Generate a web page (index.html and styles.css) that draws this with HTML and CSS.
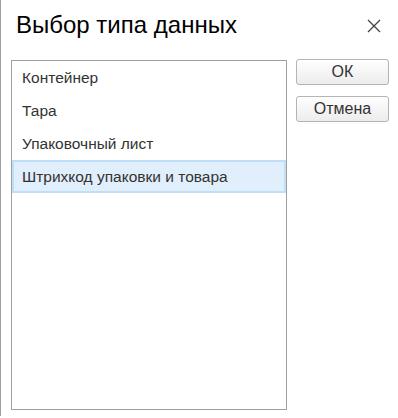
FILE: index.html
```html
<!DOCTYPE html>
<html lang="ru">
<head>
  <meta charset="UTF-8" />
  <title>Выбор типа данных</title>
  <link rel="stylesheet" href="styles.css">
</head>
<body>
  <div class="dialog">
    <div class="header">
      <h2 class="title">Выбор типа данных</h2>
      <span class="close">
        <svg width="14" height="14" viewBox="0 0 14 14">
          <path d="M1 1 L13 13 M13 1 L1 13" stroke="#444" stroke-width="1.3" fill="none"/>
        </svg>
      </span>
    </div>
    <div class="content">
      <div class="list">
        <div class="item">Контейнер</div>
        <div class="item">Тара</div>
        <div class="item">Упаковочный лист</div>
        <div class="item selected">Штрихкод упаковки и товара</div>
      </div>
      <div class="buttons">
        <button class="btn">ОК</button>
        <button class="btn">Отмена</button>
      </div>
    </div>
  </div>
</body>
</html>
```
FILE: styles.css
```css
body {
  margin: 0;
  background: white;
  font-family: "Liberation Sans", Arial, sans-serif;
}
.dialog {
  border-left: 1px solid #a0a0a0;
  height: 416px;
  box-sizing: border-box;
}
.header {
  display: flex;
  align-items: center;
  justify-content: space-between;
  height: 50px;
  padding: 0 17px 0 15px;
}
.title {
  margin: 0;
  font-weight: normal;
  font-size: 24px;
  color: #000;
}
.close {
  display: flex;
  padding-top: 1px;
}
.content {
  display: flex;
  align-items: flex-start;
  padding: 10px 0 0 10px;
}
.list {
  width: 276px;
  height: 350px;
  box-sizing: border-box;
  border: 1px solid #a0a0a0;
}
.item {
  height: 33px;
  line-height: 33px;
  padding-left: 10px;
  font-size: 15.5px;
  color: #333;
}
.selected {
  background: #e1eefb;
  border: 2px solid #bfdef7;
  line-height: 29px;
  padding-left: 8px;
  box-sizing: border-box;
}
.buttons {
  display: flex;
  flex-direction: column;
  gap: 11px;
  margin-left: 9px;
  margin-top: -1px;
}
.btn {
  width: 93px;
  height: 26px;
  border: 1px solid #b4b4b4;
  border-radius: 3px;
  background: linear-gradient(#ffffff, #ececec);
  font-family: "Liberation Sans", Arial, sans-serif;
  font-size: 16px;
  color: #333;
  padding: 0;
}
```
